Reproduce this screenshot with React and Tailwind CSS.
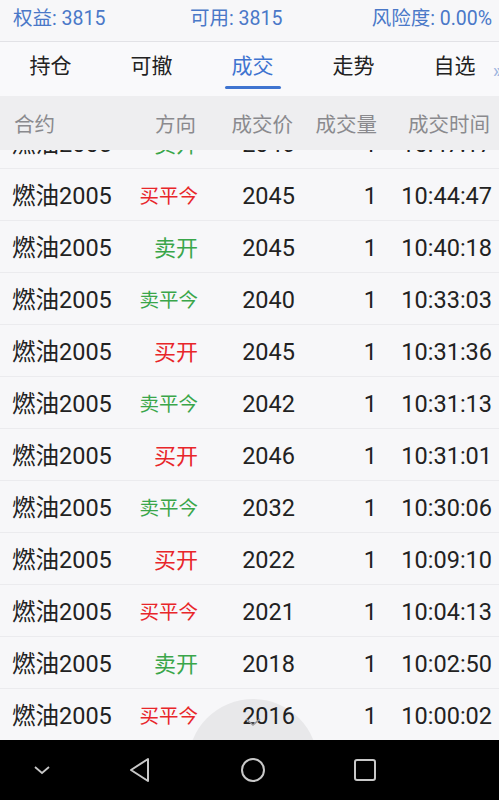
import { useState } from "react";

const font = { fontFamily: "Roboto, 'Noto Sans CJK SC', sans-serif" };

const tabs = ["持仓", "可撤", "成交", "走势", "自选"];

const rows = [
  ["卖开", "2046", "10:47:17"],
  ["买平今", "2045", "10:44:47"],
  ["卖开", "2045", "10:40:18"],
  ["卖平今", "2040", "10:33:03"],
  ["买开", "2045", "10:31:36"],
  ["卖平今", "2042", "10:31:13"],
  ["买开", "2046", "10:31:01"],
  ["卖平今", "2032", "10:30:06"],
  ["买开", "2022", "10:09:10"],
  ["买平今", "2021", "10:04:13"],
  ["卖开", "2018", "10:02:50"],
  ["买平今", "2016", "10:00:02"],
];

export default function App() {
  const [active, setActive] = useState(2);

  return (
    <div className="w-[499px] h-[800px] flex flex-col bg-[#f7f7f9] overflow-hidden relative" style={font}>
      {/* account summary */}
      <div className="h-[42px] flex-none flex items-center pl-[13px] pr-[7px] pb-[4px] border-b border-[#e2e2e6] text-[19.5px] text-[#4a78c8]">
        <span className="w-[177px]">权益: 3815</span>
        <span>可用: 3815</span>
        <span className="flex-1 text-right">风险度: 0.00%</span>
      </div>

      {/* tabs */}
      <div className="h-[54px] flex-none flex relative bg-[#f9f9fb]">
        {tabs.map((t, i) => (
          <button
            key={t}
            onClick={() => setActive(i)}
            className={`w-[101px] flex-none flex flex-col items-center justify-center relative text-[21px] ${i === active ? "text-[#3f74d0]" : "text-[#222]"}`}
          >
            <span className="-mt-[4px]">{t}</span>
            {i === active && <span className="absolute bottom-[7px] w-[56px] h-[3px] bg-[#3f74d0] rounded-sm" />}
          </button>
        ))}
        <span className="absolute right-[-3px] top-[14px] text-[20px] text-[#9db5df]">»</span>
      </div>

      {/* column header */}
      <div className="h-[54px] flex-none flex items-center pt-[4px] bg-[#eeeef0] text-[20.5px] text-[#8a8a8e] z-10">
        <span className="w-[196px] pl-[14px] flex justify-between">
          <span>合约</span>
          <span>方向</span>
        </span>
        <span className="w-[97px] text-right">成交价</span>
        <span className="w-[84px] text-right">成交量</span>
        <span className="w-[113px] text-right">成交时间</span>
      </div>

      {/* trades */}
      <div className="flex-1 overflow-hidden">
        <div className="-mt-[33px]">
          {rows.map(([dir, price, time], i) => (
            <div key={i} className="h-[52px] flex items-center pt-[4px] border-b border-[#ebebee] text-[23.5px] text-[#222]">
              <span className="w-[198px] pl-[12px] flex items-center justify-between">
                <span>燃油2005</span>
                <span className={`${dir.length > 2 ? "text-[19.5px]" : "text-[22px]"} ${dir[0] === "买" ? "text-[#e8262a]" : "text-[#3aa64a]"}`}>{dir}</span>
              </span>
              <span className="w-[97px] text-right">{price}</span>
              <span className="w-[82px] text-right">1</span>
              <span className="w-[115px] text-right">{time}</span>
            </div>
          ))}
        </div>
      </div>

      {/* floating pull-down handle */}
      <div className="absolute left-[188px] top-[699px] w-[130px] h-[130px] rounded-full bg-black/[0.06] flex justify-center pointer-events-none">
        <svg width="18" height="10" viewBox="0 0 18 10" className="mt-[18px]">
          <path d="M2 2 L9 8 L16 2" fill="none" stroke="#9a9a9e" strokeWidth="1.6" />
        </svg>
      </div>

      {/* android nav bar */}
      <div className="h-[60px] flex-none bg-black flex items-center relative z-10">
        <svg width="20" height="12" viewBox="0 0 20 12" className="absolute left-[32px] top-[24px]">
          <path d="M3 3 L10 9 L17 3" fill="none" stroke="#c8c8c8" strokeWidth="1.8" />
        </svg>
        <svg width="22" height="26" viewBox="0 0 22 26" className="absolute left-[129px] top-[17px]">
          <path d="M19 2 L19 24 L2 13 Z" fill="none" stroke="#c8c8c8" strokeWidth="2" strokeLinejoin="round" />
        </svg>
        <svg width="26" height="26" viewBox="0 0 26 26" className="absolute left-[240px] top-[17px]">
          <circle cx="13" cy="13" r="11" fill="none" stroke="#c8c8c8" strokeWidth="2" />
        </svg>
        <svg width="24" height="24" viewBox="0 0 24 24" className="absolute left-[353px] top-[18px]">
          <rect x="2" y="2" width="20" height="20" rx="2" fill="none" stroke="#c8c8c8" strokeWidth="2" />
        </svg>
      </div>
    </div>
  );
}
